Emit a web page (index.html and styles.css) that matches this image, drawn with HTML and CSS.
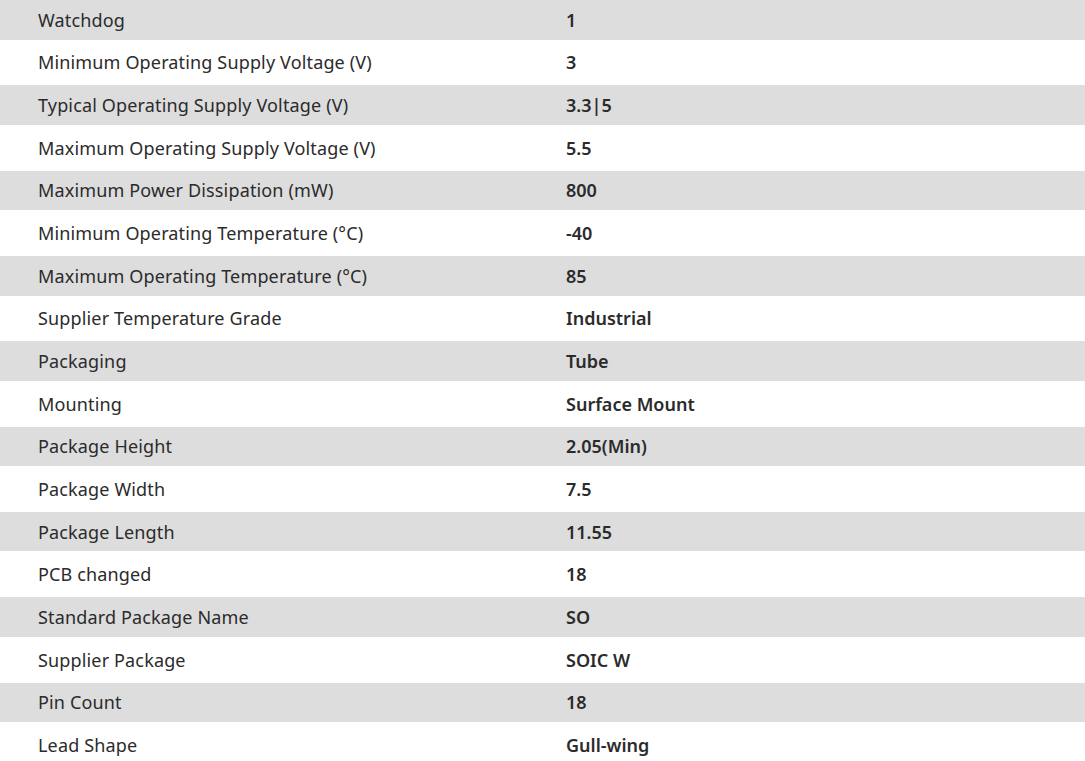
FILE: index.html
```html
<!DOCTYPE html>
<html>
<head>
<meta charset="utf-8">
<link rel="stylesheet" href="styles.css">
</head>
<body>
<div class="specs">
  <div class="row"><div class="label">Watchdog</div><div class="value">1</div></div>
  <div class="row"><div class="label">Minimum Operating Supply Voltage (V)</div><div class="value">3</div></div>
  <div class="row"><div class="label">Typical Operating Supply Voltage (V)</div><div class="value">3.3|5</div></div>
  <div class="row"><div class="label">Maximum Operating Supply Voltage (V)</div><div class="value">5.5</div></div>
  <div class="row"><div class="label">Maximum Power Dissipation (mW)</div><div class="value">800</div></div>
  <div class="row"><div class="label">Minimum Operating Temperature (°C)</div><div class="value">-40</div></div>
  <div class="row"><div class="label">Maximum Operating Temperature (°C)</div><div class="value">85</div></div>
  <div class="row"><div class="label">Supplier Temperature Grade</div><div class="value">Industrial</div></div>
  <div class="row"><div class="label">Packaging</div><div class="value">Tube</div></div>
  <div class="row"><div class="label">Mounting</div><div class="value">Surface Mount</div></div>
  <div class="row"><div class="label">Package Height</div><div class="value">2.05(Min)</div></div>
  <div class="row"><div class="label">Package Width</div><div class="value">7.5</div></div>
  <div class="row"><div class="label">Package Length</div><div class="value">11.55</div></div>
  <div class="row"><div class="label">PCB changed</div><div class="value">18</div></div>
  <div class="row"><div class="label">Standard Package Name</div><div class="value">SO</div></div>
  <div class="row"><div class="label">Supplier Package</div><div class="value">SOIC W</div></div>
  <div class="row"><div class="label">Pin Count</div><div class="value">18</div></div>
  <div class="row"><div class="label">Lead Shape</div><div class="value">Gull-wing</div></div>
</div>
</body>
</html>
```
FILE: styles.css
```css
html, body {
  margin: 0;
  padding: 0;
  background: #ffffff;
}
body {
  font-family: "Noto Sans", "Open Sans", sans-serif;
  color: #2b2b2b;
  font-size: 18px;
}
.specs {
  display: flex;
  flex-direction: column;
}
.row {
  display: grid;
  grid-template-columns: 566px 1fr;
  align-items: center;
  height: 45.73px;
  background: #ffffff;
}
.row:nth-child(odd) {
  background: #dddddd;
  height: 39.6px;
}
.label {
  padding-left: 38px;
  letter-spacing: 0.15px;
}
.value {
  font-weight: 600;
}
```
